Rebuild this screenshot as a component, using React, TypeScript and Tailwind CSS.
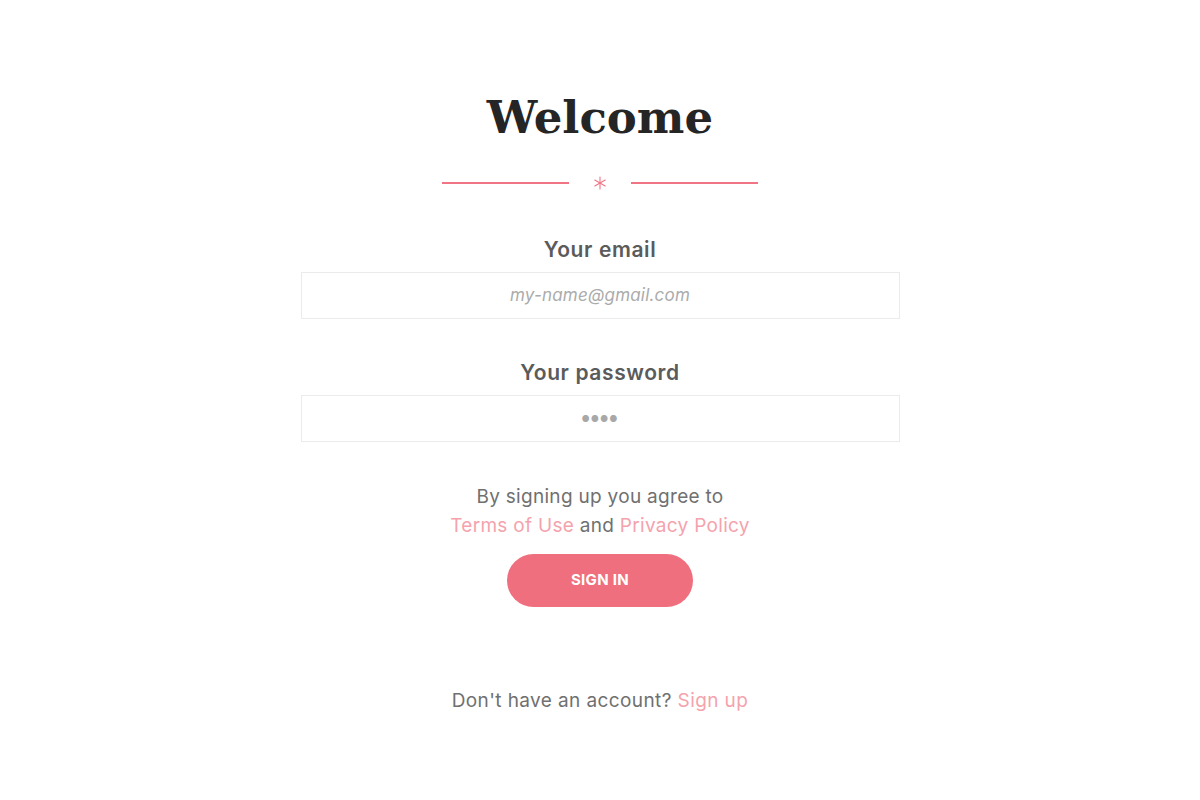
import React from "react";

export default function App() {
  const sans = { fontFamily: '"Inter", "Open Sans", sans-serif' };
  return (
    <div className="w-[1200px] h-[800px] bg-white flex flex-col items-center" style={sans}>
      <h1
        className="mt-[88px] text-[45px] leading-[60px] font-bold text-[#252525]"
        style={{ fontFamily: '"DejaVu Serif", "Liberation Serif", serif' }}
      >
        Welcome
      </h1>
      <div className="mt-[26px] flex items-center gap-[22px]">
        <div className="w-[127px] h-[2px] bg-[#f07484]" />
        <svg width="18" height="18" viewBox="0 0 18 18" className="text-[#f07484]">
          <g stroke="currentColor" strokeWidth="1.1" strokeLinecap="round">
            <line x1="9" y1="3" x2="9" y2="15" />
            <line x1="3.8" y1="6" x2="14.2" y2="12" />
            <line x1="3.8" y1="12" x2="14.2" y2="6" />
          </g>
        </svg>
        <div className="w-[127px] h-[2px] bg-[#f07484]" />
      </div>
      <label className="mt-[44px] text-[21px] leading-[28px] font-semibold tracking-[0.6px] text-[#5b5b5b]">Your email</label>
      <div className="mt-[8px] w-[599px] h-[47px] border border-[#ebebeb] flex items-center justify-center">
        <span className="italic text-[17px] text-[#ababab] tracking-[0.2px]">my-name@gmail.com</span>
      </div>
      <label className="mt-[40px] text-[21px] leading-[28px] font-semibold tracking-[0.6px] text-[#5b5b5b]">Your password</label>
      <div className="mt-[8px] w-[599px] h-[47px] border border-[#ebebeb] flex items-center justify-center">
        <span className="text-[#a8a8a8] text-[9px] tracking-[1px]">●●●●</span>
      </div>
      <p className="mt-[40px] text-[19px] leading-[29px] tracking-[0.3px] text-[#707070] text-center">
        By signing up you agree to
        <br />
        <span className="text-[#f4a3ad]">Terms of Use</span> and{" "}
        <span className="text-[#f4a3ad]">Privacy Policy</span>
      </p>
      <button className="mt-[14px] w-[186px] h-[53px] rounded-full bg-[#ef6f7e] text-white text-[15px] font-bold tracking-[0.3px]">
        SIGN IN
      </button>
      <p className="mt-[80px] text-[19px] leading-[28px] tracking-[0.4px] text-[#707070]">
        Don't have an account? <span className="text-[#f4a3ad]">Sign up</span>
      </p>
    </div>
  );
}
